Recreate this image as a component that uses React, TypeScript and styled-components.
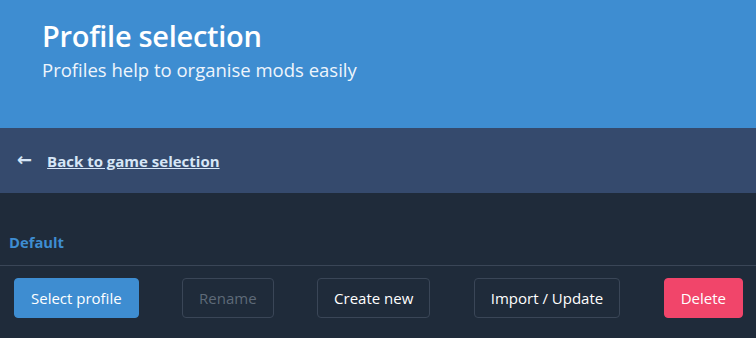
import { createGlobalStyle } from "styled-components";
import styled from "styled-components";

const GlobalStyle = createGlobalStyle`
    html, body {
        margin: 0;
        padding: 0;
        background-color: #1f2b3a;
        font-family: "Open Sans", "Noto Sans", sans-serif;
    }
`

const Hero = styled.section`
    background-color: #3e8dd1;
    height: 128px;
    padding: 16px 42px 0;
    box-sizing: border-box;
    color: white;
`

const Title = styled.h1`
    margin: 0;
    font-size: 29px;
    font-weight: 600;
    line-height: 40px;
    letter-spacing: -0.3px;
`

const Subtitle = styled.h2`
    margin: 0;
    font-size: 18.5px;
    font-weight: 400;
    line-height: 28px;
    color: #eef5fc;
`

const NavBar = styled.nav`
    background-color: #354a6d;
    height: 65px;
    display: flex;
    align-items: center;
    padding: 0 17px;
    gap: 15px;
`

const BackLink = styled.a`
    color: #d6e6f7;
    font-size: 15px;
    font-weight: 700;
    text-decoration: underline;
    cursor: pointer;
`

const Arrow = styled.span`
    color: #d6e6f7;
    font-size: 18px;
    font-weight: 700;
    line-height: 1;
    font-family: "DejaVu Sans", sans-serif;
    margin-top: -2px;
`

const Card = styled.div`
    padding-top: 38px;
`

const ProfileName = styled.div`
    color: #3e8dd1;
    font-weight: 700;
    font-size: 14.8px;
    padding: 0 9px 12px;
    line-height: 22px;
`

const Divider = styled.hr`
    margin: 0;
    border: none;
    border-top: 1px solid #3a4657;
`

const ButtonRow = styled.div`
    display: flex;
    justify-content: space-between;
    padding: 12px 13px 0 14px;
`

const Button = styled.button<{ $variant?: "primary" | "danger" | "disabled" }>`
    height: 40px;
    box-sizing: border-box;
    padding: 0 16px;
    border-radius: 4px;
    font-family: inherit;
    font-size: 15px;
    border: 1px solid ${({ $variant }) =>
        $variant === "primary" ? "#3e8dd1" : $variant === "danger" ? "#f1456a" : "#3a4657"};
    background-color: ${({ $variant }) =>
        $variant === "primary" ? "#3e8dd1" : $variant === "danger" ? "#f1456a" : "transparent"};
    color: ${({ $variant }) => ($variant === "disabled" ? "#5e6a78" : "#ffffff")};
    cursor: ${({ $variant }) => ($variant === "disabled" ? "default" : "pointer")};
`

const App = () => {
    return (
        <>
            <GlobalStyle />
            <Hero>
                <Title>Profile selection</Title>
                <Subtitle>Profiles help to organise mods easily</Subtitle>
            </Hero>
            <NavBar>
                <Arrow>←</Arrow>
                <BackLink>Back to game selection</BackLink>
            </NavBar>
            <Card>
                <ProfileName>Default</ProfileName>
                <Divider />
                <ButtonRow>
                    <Button $variant="primary">Select profile</Button>
                    <Button $variant="disabled">Rename</Button>
                    <Button>Create new</Button>
                    <Button>Import / Update</Button>
                    <Button $variant="danger">Delete</Button>
                </ButtonRow>
            </Card>
        </>
    )
};

export default App;
